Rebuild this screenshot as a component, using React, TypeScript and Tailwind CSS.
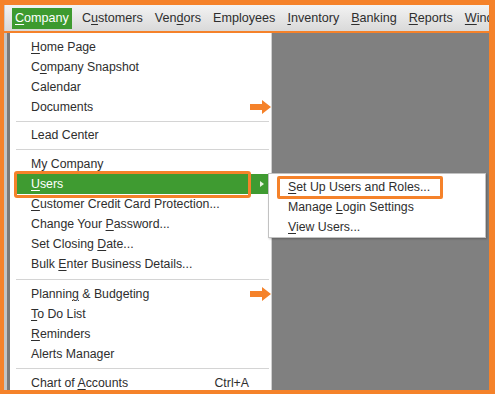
import React from 'react';

type Item = { label: React.ReactNode; sep?: number; arrow?: boolean; shortcut?: string; active?: boolean };

const U = ({ children }: { children: React.ReactNode }) => <span className="underline underline-offset-2">{children}</span>;

const OrangeArrow = () => (
  <svg width="21" height="14" viewBox="0 0 21 14" className="absolute right-[0px] top-[3px]">
    <path d="M0 4 H12 V0 L21 7 L12 14 V10 H0 Z" fill="#f5822a" />
  </svg>
);

const items: Item[] = [
  { label: <><U>H</U>ome Page</> },
  { label: <>C<U>o</U>mpany Snapshot</> },
  { label: 'Calendar' },
  { label: 'Documents', arrow: true },
  { label: 'Lead Center', sep: 8 },
  { label: 'My Company', sep: 9 },
  { label: <><U>U</U>sers</>, active: true },
  { label: <><U>C</U>ustomer Credit Card Protection...</> },
  { label: <>Change Your <U>P</U>assword...</> },
  { label: <>Set Closing <U>D</U>ate...</> },
  { label: <>Bulk <U>E</U>nter Business Details...</> },
  { label: <>Plannin<U>g</U> &amp; Budgeting</>, sep: 10, arrow: true },
  { label: <><U>T</U>o Do List</> },
  { label: <><U>R</U>eminders</> },
  { label: 'Alerts Manager' },
  { label: <>Chart of <U>A</U>ccounts</>, sep: 9, shortcut: 'Ctrl+A' },
];

const topMenus: React.ReactNode[] = [
  <>C<U>u</U>stomers</>,
  <>Ven<U>d</U>ors</>,
  <>Employees</>,
  <><U>I</U>nventory</>,
  <><U>B</U>anking</>,
  <><U>R</U>eports</>,
  <><U>W</U>indow</>,
];

const sepClass: Record<number, string> = { 8: 'h-[8px]', 9: 'h-[9px]', 10: 'h-[10px]' };

export default function App() {
  return (
    <div
      className="w-[495px] h-[394px] bg-[#f5822a] pl-[4px] pt-[5px] pr-[6px] pb-[4px] flex flex-col text-[12.3px] text-[#2e2e2e] overflow-hidden"
      style={{ fontFamily: '"Liberation Sans", Arial, sans-serif' }}
    >
      {/* Menu bar */}
      <div className="h-[26px] shrink-0 bg-gradient-to-b from-[#f3f3f3] to-[#d9d9d9] flex items-center overflow-hidden whitespace-nowrap text-[12.6px]">
        <div className="w-[4px] h-full bg-[#e6e6e6] border-r border-[#c9c9c9]" />
        <div className="ml-[7px] h-[21px] px-[3px] bg-[#3d9a2f] text-white flex items-center">
          <span><U>C</U>ompany</span>
        </div>
        <div className="flex items-center gap-[12px] ml-[10px]">
          {topMenus.map((m, i) => (
            <span key={i}>{m}</span>
          ))}
        </div>
      </div>
      <div className="h-[2px] shrink-0 bg-[#f5822a]" />

      {/* Content */}
      <div className="flex-1 flex min-h-0 relative">
        <div className="w-[6px] bg-[#7a7a7a] border-l-[3px] border-[#c4c4c4]" />
        <div className="w-[262px] bg-white pt-[4px] border-r border-[#d0d0d0] relative">
          {items.map((it, i) => (
            <React.Fragment key={i}>
              {it.sep && (
                <div className={`${sepClass[it.sep]} flex items-center pl-[6px] pr-[2px]`}>
                  <div className="h-px w-full bg-[#d4d4d4]" />
                </div>
              )}
              <div className="h-[20px] relative flex items-center">
                {it.active && (
                  <>
                    <div className="absolute left-[4px] right-[3px] top-0 bottom-0 bg-[#3f9b31]">
                      <div className="absolute right-[4px] top-[7px] w-0 h-0 border-y-[3px] border-y-transparent border-l-[4px] border-l-[#e8f3e0]" />
                    </div>
                    <div className="absolute left-[4px] top-[-3px] w-[237px] h-[27px] border-[3px] border-[#f5822a] rounded-[3px]" />
                  </>
                )}
                <span className={`relative pl-[21px] flex-1 ${it.active ? 'text-white' : ''}`}>{it.label}</span>
                {it.shortcut && <span className="relative pr-[22px]">{it.shortcut}</span>}
                {it.arrow && <OrangeArrow />}
              </div>
            </React.Fragment>
          ))}
        </div>
        <div className="flex-1 bg-[#808080]" />

        {/* Submenu */}
        <div className="absolute left-[264px] top-[140px] w-[218px] h-[65px] bg-white border border-[#c2c2c2] shadow-[1px_1px_2px_rgba(0,0,0,0.25)] pt-[3px]">
          <div className="h-[20px] relative flex items-center">
            <div className="absolute left-[8px] top-[-1px] w-[166px] h-[23px] border-[3px] border-[#f5822a] rounded-[2px]" />
            <span className="relative pl-[19px]"><U>S</U>et Up Users and Roles...</span>
          </div>
          <div className="h-[20px] flex items-center pl-[19px]">
            <span>Manage <U>L</U>ogin Settings</span>
          </div>
          <div className="h-[20px] flex items-center pl-[19px]">
            <span><U>V</U>iew Users...</span>
          </div>
        </div>
      </div>
    </div>
  );
}
